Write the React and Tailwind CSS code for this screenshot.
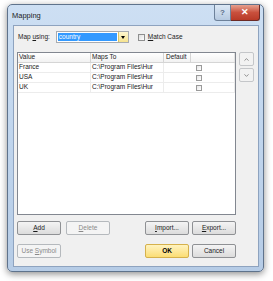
import { ChevronDown, ChevronUp } from "lucide-react";

const rows = [
  { value: "France", path: "C:\\Program Files\\Hur" },
  { value: "USA", path: "C:\\Program Files\\Hur" },
  { value: "UK", path: "C:\\Program Files\\Hur" },
];

function Btn({ children, className = "", disabled, primary }) {
  const base = disabled
    ? "border-[#b5b9bd] bg-[#f4f4f4] text-[#8a8a8a]"
    : primary
    ? "border-[#d5b14c] bg-gradient-to-b from-[#fff3bf] to-[#fbdd73] text-black font-bold"
    : "border-[#8f9194] bg-gradient-to-b from-[#f4f4f4] to-[#dcdcdc] text-[#1a1a1a]";
  return (
    <div
      className={`flex h-[14px] w-[44px] items-center justify-center rounded-[2px] border text-[6.5px] ${base} ${className}`}
    >
      <span className="whitespace-nowrap">{children}</span>
    </div>
  );
}

function Check() {
  return <div className="h-[6px] w-[6px] border border-[#9a9a9a] bg-gradient-to-br from-[#e6e6e6] to-white" />;
}

export default function App() {
  return (
    <div
      className="h-[281px] w-[273px] overflow-hidden bg-white pl-[7px] pt-[4px]"
      style={{ fontFamily: '"Liberation Sans", Arial, sans-serif' }}
    >
      <div className="flex h-[268px] w-[257px] flex-col rounded-[5px] border border-[#5f738c] bg-gradient-to-b from-[#cddff3] via-[#c0d5ed] to-[#b6cce6] shadow-[0_2px_7px_rgba(0,0,0,0.45)]">
        {/* title bar */}
        <div className="flex h-[20px] items-start">
          <span className="ml-[4px] mt-[7px] text-[7.5px] leading-none text-[#1b1b1b]">Mapping</span>
          <div className="ml-auto mr-[3px] flex">
            <div className="flex h-[16px] w-[17px] items-center justify-center rounded-bl-[3px] border border-t-0 border-[#6d819a] bg-gradient-to-b from-[#dce8f5] to-[#b6c9e0] text-[8px] font-bold text-[#5a6e88]">
              ?
            </div>
            <div className="flex h-[16px] w-[29px] items-center justify-center rounded-br-[3px] border border-l-0 border-t-0 border-[#6b2a25] bg-gradient-to-b from-[#e5a08f] via-[#c9503d] to-[#b83a27] text-[9px] font-bold text-white">
              ✕
            </div>
          </div>
        </div>

        {/* client area */}
        <div className="ml-[5px] mr-[4px] flex h-[242px] flex-col border border-[#8ea3bf] bg-[#f0f0f0] text-[6.5px] leading-none text-[#1a1a1a]">
          <div className="ml-[4px] mt-[5px] flex h-[12px] items-center">
            <span>
              Map <span className="underline">u</span>sing:
            </span>
            <div className="ml-[6px] flex h-[12px] w-[73px] border border-[#a8abb0] bg-white">
              <div className="m-[1px] flex flex-1 items-center bg-[#3399ff] pl-[1px] text-white">country</div>
              <div className="flex w-[10px] items-center justify-center border-l border-[#d8c46a] bg-gradient-to-b from-[#fdf6cf] to-[#f6e38f]">
                <div className="h-0 w-0 border-x-[2.5px] border-t-[3px] border-x-transparent border-t-black" />
              </div>
            </div>
            <div className="ml-[9px] h-[7px] w-[7px] border border-[#8e8f8f] bg-gradient-to-br from-[#dedede] to-white" />
            <span className="ml-[3px]">
              <span className="underline">M</span>atch Case
            </span>
          </div>

          <div className="mt-[9px] flex">
            <div className="ml-[3px] flex h-[163px] w-[219px] flex-col border border-[#828790] bg-white">
              <div className="flex h-[10px] border-b border-[#d5d5d5] bg-gradient-to-b from-white to-[#f2f2f2]">
                <div className="flex w-[73px] items-center border-r border-[#d5d5d5] pl-[1px]">Value</div>
                <div className="flex w-[73px] items-center border-r border-[#d5d5d5] pl-[1px]">Maps To</div>
                <div className="flex w-[27px] items-center border-r border-[#d5d5d5] pl-[2px]">Default</div>
                <div className="flex-1 border-r border-[#e3e3e3]" />
              </div>
              {rows.map((r) => (
                <div key={r.value} className="flex h-[10px] border-b border-[#ececec]">
                  <div className="flex w-[73px] items-center border-r border-[#ececec] pl-[1px]">{r.value}</div>
                  <div className="flex w-[73px] items-center whitespace-nowrap border-r border-[#ececec] pl-[1px]">
                    {r.path}
                  </div>
                  <div className="flex flex-1 items-center justify-center border-r border-[#ececec]">
                    <Check />
                  </div>
                </div>
              ))}
            </div>
            <div className="ml-[3px] flex flex-col gap-[2px]">
              <div className="flex h-[14px] w-[15px] items-center justify-center rounded-[2px] border border-[#c4c6c9] bg-[#f2f2f2] text-[#6b6b6b]">
                <ChevronUp size={7} strokeWidth={2.5} />
              </div>
              <div className="flex h-[14px] w-[15px] items-center justify-center rounded-[2px] border border-[#c4c6c9] bg-[#f2f2f2] text-[#6b6b6b]">
                <ChevronDown size={7} strokeWidth={2.5} />
              </div>
            </div>
          </div>

          <div className="ml-[3px] mt-[6px] flex">
            <Btn>
              <span className="underline">A</span>dd
            </Btn>
            <Btn disabled className="ml-[5px]">
              <span className="underline">D</span>elete
            </Btn>
            <Btn className="ml-[35px]">
              <span className="underline">I</span>mport...
            </Btn>
            <Btn className="ml-[3px]">
              <span className="underline">E</span>xport...
            </Btn>
          </div>

          <div className="ml-[3px] mt-[9px] flex">
            <Btn disabled>
              Use <span className="underline">S</span>ymbol
            </Btn>
            <Btn primary className="ml-[84px]">
              OK
            </Btn>
            <Btn className="ml-[3px]">Cancel</Btn>
          </div>
        </div>
      </div>
    </div>
  );
}
